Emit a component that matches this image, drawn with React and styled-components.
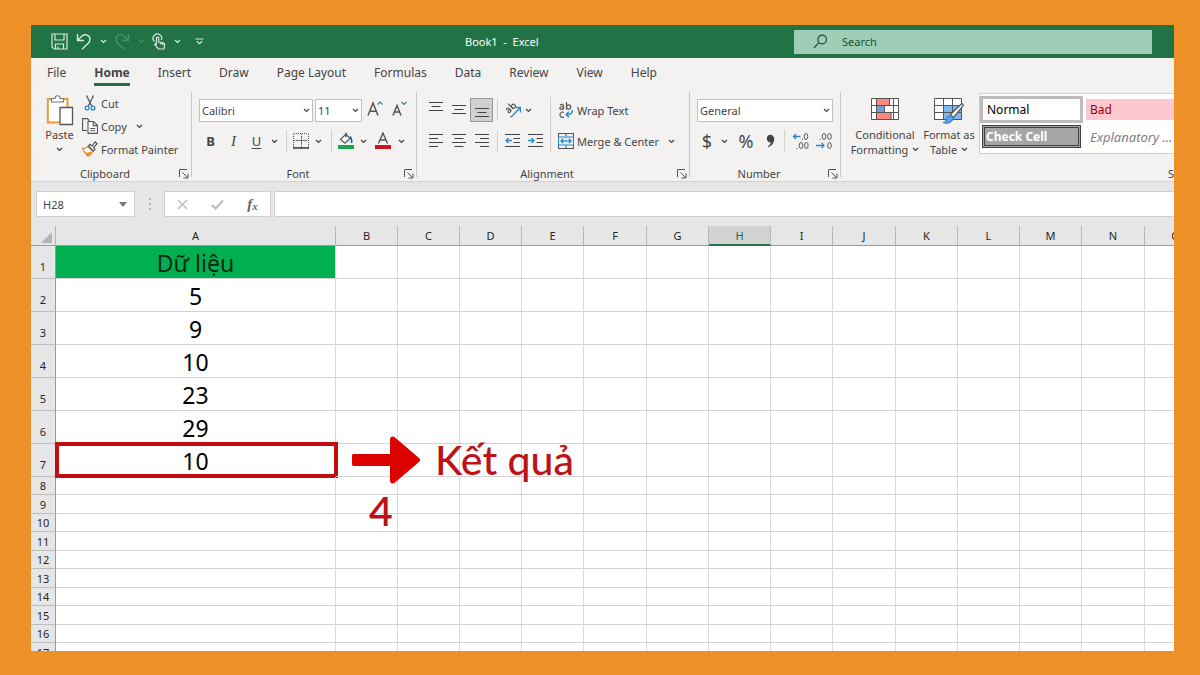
import React, { useState } from "react";
import styled, { createGlobalStyle, css } from "styled-components";

const GlobalStyle = createGlobalStyle`
  * {
    box-sizing: border-box;
  }

  body {
    margin: 0;
    background-color: #ed9028;
    font-family: "Noto Sans", "Open Sans", sans-serif;
    font-size: 12px;
    color: #444444;
  }

  button,
  input,
  select {
    font: inherit;
    color: inherit;
  }
`;

const Page = styled.div`
  height: 100vh;
  padding: 25px 26px 24px 31px;
  background-color: #ed9028;
`;

const Window = styled.main`
  display: flex;
  flex-direction: column;
  height: 100%;
  overflow: hidden;
  background-color: #ffffff;
`;

// Title bar
const TitleBar = styled.header`
  display: flex;
  flex: none;
  align-items: center;
  height: 33px;
  padding-right: 22px;
  background-color: #217346;
  color: #ffffff;
`;

const QuickTools = styled.div`
  display: flex;
  align-items: center;
  flex: 0 0 434px;
  padding-left: 16px;
`;

const Title = styled.h1`
  margin: 0;
  font-size: 11px;
  font-weight: 400;
  white-space: pre;
`;

const SearchBox = styled.label`
  display: flex;
  align-items: center;
  gap: 14px;
  width: 358px;
  height: 24px;
  margin-left: auto;
  padding-left: 19px;
  background-color: #9fcdb5;
  color: #185234;
`;

const SearchInput = styled.input`
  flex: 1;
  min-width: 0;
  padding: 0;
  border: none;
  outline: none;
  background: none;
  font-size: 11px;

  &::placeholder {
    color: #185234;
    opacity: 1;
  }
`;

// Tabs
const Tabs = styled.nav`
  display: flex;
  flex: none;
  gap: 28px;
  height: 30px;
  padding-left: 16px;
  background-color: #f3f2f1;
`;

const Tab = styled.button`
  height: 28px;
  padding: 5px 0 0;
  border: none;
  border-bottom: 3px solid ${(p) => (p.$active ? "#217346" : "transparent")};
  background: none;
  font-weight: ${(p) => (p.$active ? 700 : 400)};
  line-height: 20px;
  white-space: nowrap;
  cursor: pointer;
`;

// Ribbon
const Ribbon = styled.section`
  display: flex;
  flex: none;
  height: 94px;
  padding: 4px 0;
  overflow: hidden;
  border-bottom: 1px solid #d2d2d2;
  background-color: #f3f2f1;
`;

const Group = styled.div`
  display: flex;
  flex-direction: column;
  flex: 0 0 ${(p) => p.$w}px;
  border-right: 1px solid #c8c6c4;
`;

const GroupBody = styled.div`
  display: flex;
  flex: none;
  height: 76px;
  padding-left: ${(p) => p.$pad || 7}px;
`;

const GroupFooter = styled.div`
  display: flex;
  flex: none;
  align-items: center;
  height: 12px;
  padding-right: 2px;
  line-height: 12px;
  font-size: 11px;
`;

const GroupLabel = styled.span`
  flex: 1;
  text-align: center;
`;

const Launcher = styled.button`
  display: flex;
  padding: 0;
  border: none;
  background: none;
`;

const Rows = styled.div`
  display: flex;
  flex-direction: column;
  gap: 5px;
  padding-top: 5px;
`;

const Row = styled.div`
  display: flex;
  align-items: center;
  gap: ${(p) => p.$gap || 0}px;
  height: 26px;
`;

const Tool = styled.button`
  display: flex;
  flex: none;
  align-items: center;
  justify-content: center;
  width: ${(p) => p.$w || 23}px;
  height: 24px;
  padding: 0;
  border: none;
  background: none;
  cursor: pointer;

  svg {
    flex: none;
  }

  ${(p) =>
    p.$pressed &&
    css`
      border: 1px solid #979593;
      background-color: #d2d0ce;
    `}
`;

const BoldMark = styled.b`
  font-size: 13px;
`;

const ItalicMark = styled.i`
  font-family: "Liberation Serif", serif;
  font-size: 15px;
`;

const UnderlineMark = styled.u`
  font-size: 13px;
  text-underline-offset: 2px;
`;

const Symbol = styled.span`
  font-size: 18px;
  line-height: 20px;
`;

const Divider = styled.span`
  display: flex;
  justify-content: center;
  width: ${(p) => p.$w}px;

  &::before {
    content: "";
    width: 1px;
    height: 22px;
    background-color: #d2d0ce;
  }
`;

const LongDivider = styled.span`
  width: 1px;
  height: 56px;
  margin: 5px 7px 0 3px;
  background-color: #d2d0ce;
`;

const TextTool = styled.button`
  display: flex;
  align-items: center;
  gap: 3px;
  height: ${(p) => p.$h || 26}px;
  padding: 0;
  border: none;
  background: none;
  font-size: 11px;
  white-space: nowrap;
  cursor: pointer;
`;

const ChevronSlot = styled.span`
  display: flex;
  padding-left: 6px;
`;

const BigTool = styled.button`
  display: flex;
  flex-direction: column;
  align-items: center;
  width: ${(p) => p.$w}px;
  padding: 3px 0 0;
  border: none;
  background: none;
  font-size: 11px;
  line-height: 16px;
  white-space: nowrap;
  cursor: pointer;
`;

const BigIcon = styled.span`
  display: flex;
  height: 32px;
`;

const BigLine = styled.span`
  display: flex;
  align-items: center;
  gap: 4px;
  height: 15px;
`;

const ClipboardList = styled.div`
  padding-left: 8px;
`;

const SelectBox = styled.label`
  display: block;
  position: relative;
  width: ${(p) => p.$w}px;
  height: 23px;
`;

const Select = styled.select`
  width: 100%;
  height: 100%;
  padding: 0 0 0 2px;
  border: 1px solid #c3c1bf;
  border-radius: 0;
  appearance: none;
  background-color: #ffffff;
  font-size: 11px;
`;

const SelectArrow = styled.span`
  position: absolute;
  top: 9px;
  right: 3px;
  display: flex;
  pointer-events: none;
`;

const Gallery = styled.div`
  display: grid;
  grid-template-columns: 103px 103px 103px;
  grid-template-rows: 27px 23px;
  gap: 2px 3px;
  height: 61px;
  margin-top: 1px;
  margin-left: 3px;
  padding: 2px 0;
  border: 1px solid #d2d0ce;
  background-color: #ffffff;
`;

const StyleCell = styled.button`
  padding: 0 0 0 4px;
  border: none;
  background-color: #ffffff;
  color: #000000;
  font-size: 12px;
  line-height: 16px;
  text-align: left;
  white-space: nowrap;

  ${(p) =>
    p.$kind === "normal" &&
    css`
      border: 3px solid #bebcba;
    `}
  ${(p) =>
    p.$kind === "bad" &&
    css`
      margin: 3px 0;
      background-color: #ffc7ce;
      color: #9c0006;
    `}
  ${(p) =>
    p.$kind === "check" &&
    css`
      margin: 0 2px;
      padding-left: 1px;
      border: 3px double #3f3f3f;
      background-color: #a5a5a5;
      color: #ffffff;
      font-weight: 700;
    `}
  ${(p) =>
    p.$kind === "note" &&
    css`
      color: #7f7f7f;
      font-size: 13px;
      font-style: italic;
    `}
`;

// Formula bar
const FormulaBar = styled.section`
  display: flex;
  flex: none;
  align-items: center;
  height: 44px;
  padding-left: 5px;
  background-color: #e6e6e6;
`;

const NameBox = styled.label`
  display: flex;
  align-items: center;
  width: 99px;
  height: 26px;
  padding-right: 7px;
  border: 1px solid #cfcfcf;
  background-color: #ffffff;
`;

const NameInput = styled.input`
  flex: 1;
  min-width: 0;
  padding: 0 0 0 6px;
  border: none;
  outline: none;
  background: none;
  font-size: 11px;
`;

const Grip = styled.span`
  display: flex;
  justify-content: center;
  width: 29px;
`;

const FormulaTools = styled.div`
  display: flex;
  width: 107px;
  height: 26px;
  border: 1px solid #cfcfcf;
  background-color: #ffffff;
`;

const FormulaButton = styled.button`
  display: flex;
  flex: 1;
  align-items: center;
  justify-content: center;
  padding: 0;
  border: none;
  background: none;
  color: #666666;
  font-family: "Liberation Serif", serif;
  font-size: 15px;
  font-style: italic;
  font-weight: 700;
`;

const SmallX = styled.span`
  padding-top: 3px;
  font-size: 11px;
`;

const FormulaInput = styled.input`
  flex: 1;
  min-width: 0;
  height: 26px;
  margin-left: 3px;
  border: 1px solid #cfcfcf;
  border-right: none;
  border-radius: 0;
  background-color: #ffffff;
`;

// Sheet
const Sheet = styled.section`
  flex: 1;
  position: relative;
  min-height: 0;
  overflow: hidden;
`;

const Grid = styled.table`
  width: 100%;
  table-layout: fixed;
  border-spacing: 0;
`;

const Col = styled.col`
  width: ${(p) => p.$w}px;
`;

const Corner = styled.td`
  height: 20px;
  padding: 0 3px 2px 0;
  border-right: 1px solid #b5b5b5;
  border-bottom: 1px solid #9b9b9b;
  background-color: #e6e6e6;
  vertical-align: bottom;
`;

const CornerIcon = styled.svg`
  display: block;
  margin-left: auto;
`;

const ColHead = styled.th`
  height: 20px;
  padding: 0;
  border-right: 1px solid #b9b9b9;
  border-bottom: 1px solid #9b9b9b;
  background-color: #e6e6e6;
  color: #262626;
  font-size: 11px;
  font-weight: 400;
  line-height: 16px;

  ${(p) =>
    p.$selected &&
    css`
      padding-top: 1px;
      border-bottom: 2px solid #217346;
      background-color: #d2d2d2;
      color: #217346;
    `}
`;

const RowHead = styled.th`
  height: ${(p) => p.$h}px;
  padding: 0 0 ${(p) => (p.$h > 20 ? 3 : 0)}px;
  border-right: 1px solid #9b9b9b;
  border-bottom: 1px solid #bdbdbd;
  background-color: #e6e6e6;
  color: #262626;
  font-size: 11px;
  font-weight: 400;
  line-height: 17px;
  vertical-align: bottom;
`;

const Cell = styled.td`
  position: relative;
  padding: 2px 0 0;
  border-right: 1px solid #d9d9d9;
  border-bottom: 1px solid #d4d4d4;
  color: #000000;
  font-size: 23px;
  line-height: 30px;
  text-align: center;

  ${(p) =>
    p.$title &&
    css`
      background-color: #00b050;
      color: #06290f;
    `}
`;

const ResultFrame = styled.span`
  position: absolute;
  inset: -2px -3px -2px -1px;
  border: 4px solid #c00d12;
`;

const Result = styled.div`
  position: absolute;
  top: 206px;
  left: 320px;
  display: flex;
  align-items: center;
  gap: 14px;
  color: #bd1218;
  font-family: Lato, "Open Sans", sans-serif;
  font-size: 41px;
  font-weight: 500;
  line-height: 56px;
  white-space: nowrap;
`;

const StepNumber = styled.div`
  position: absolute;
  top: 257px;
  left: 338px;
  color: #bd1218;
  font-family: Lato, "Open Sans", sans-serif;
  font-size: 41px;
  font-weight: 600;
  line-height: 56px;
`;

const Chevron = ({ color = "#444444" }) => (
  <svg width="7" height="5" viewBox="0 0 7 5" fill="none" stroke={color} strokeWidth="1.2">
    <path d="M1 1l2.5 2.5L6 1" />
  </svg>
);

const LauncherIcon = () => (
  <svg width="10" height="10" viewBox="0 0 10 10" fill="none" stroke="#555">
    <path d="M.5 8V.5H8M3.500 3.500l5 5M9 4.500v4.500H4.500" />
  </svg>
);

const SaveIcon = () => (
  <svg width="17" height="17" viewBox="0 0 17 17" fill="none" stroke="#d6eadf" strokeWidth="1.200">
    <path d="M1 1h15v15H3l-2-2zM4 1v6h9V1M4.500 16v-5h8v5M7 16v-2.500" />
  </svg>
);

const UndoIcon = ({ color = "#d6eadf", flip }) => (
  <svg width="16" height="17" viewBox="0 0 16 17" fill="none" stroke={color} strokeWidth="1.400">
    <path
      transform={flip ? "translate(16 0) scale(-1 1)" : undefined}
      d="M1.500 1v6.500H8M1.500 7.500L6 3c3-2.600 8-.8 8 3.200 0 2-.8 3-2 4.200L6 16.300"
    />
  </svg>
);

const TouchIcon = () => (
  <svg width="14" height="17" viewBox="0 0 14 17" fill="none" stroke="#d6eadf" strokeWidth="1.200">
    <path d="M2.500 8.500A4.300 4.300 0 1 1 9.300 7" />
    <path d="M4.500 12V5.200c0-1.600 2.200-1.600 2.200 0V9l4.300.8c1 .2 1.700.8 1.600 1.700L12 16H6.500L3 12.200c-.8-.9.3-1.800 1.500-1M8.800 9.500v2M10.700 10v2" />
  </svg>
);

const CustomizeIcon = () => (
  <svg width="9" height="7" viewBox="0 0 9 7" fill="none" stroke="#d6eadf" strokeWidth="1.200">
    <path d="M.5 1h8M1.800 3.200l2.700 2.500 2.700-2.500" />
  </svg>
);

const SearchIcon = () => (
  <svg width="15" height="15" viewBox="0 0 15 15" fill="none" stroke="#185234" strokeWidth="1.200">
    <circle cx="9.200" cy="5.500" r="4.300" />
    <path d="M6 8.700L.8 14" />
  </svg>
);

const PasteIcon = () => (
  <svg width="28" height="31" viewBox="0 0 28 31" fill="none">
    <path d="M8 4H1.800v23.500H13M15 4h6.500v8" stroke="#eb9b3b" strokeWidth="2" />
    <path d="M3 5.500h17V12h-7v14H3z" fill="#fff" />
    <path d="M5.500 7V3.500H9C9.200-.2 14-.2 14.200 3.500h3.300V7z" fill="#fff" stroke="#777" strokeWidth="1.200" />
    <path d="M14 12.500h12.500v17H14z" fill="#fff" stroke="#555" strokeWidth="1.300" />
  </svg>
);

const CutIcon = () => (
  <svg width="16" height="16" viewBox="0 0 16 16" fill="none">
    <path d="M4.500.5l5.300 10.700M11.500.5L6.200 11.200" stroke="#555" strokeWidth="1.300" />
    <circle cx="5" cy="13" r="1.900" stroke="#2b88c8" strokeWidth="1.300" />
    <circle cx="11" cy="13" r="1.900" stroke="#2b88c8" strokeWidth="1.300" />
  </svg>
);

const CopyIcon = () => (
  <svg width="16" height="16" viewBox="0 0 16 16" fill="none" stroke="#555" strokeWidth="1.100">
    <path d="M5 12.500H.6V.6h4.900l2 2.200" />
    <path d="M6 3.500h5.500l3.900 3.800v8.100H6z" fill="#fff" />
    <path d="M11.200 3.700v3.900h4M8.200 10.500h5M8.200 12.700h5" />
  </svg>
);

const PainterIcon = () => (
  <svg width="16" height="16" viewBox="0 0 16 16" fill="none">
    <path d="M.8 7.500C3 8 4.500 6.800 6 5.600l4.800 4.900c-.9 2-2.400 3.800-4.800 4.700C4 13.500 2 11 .8 7.500z" fill="#fff" stroke="#e2892b" strokeWidth="1.300" />
    <path d="M3 11.500c2.500.5 4.200-.2 6.500-1.300L8.500 13 6 15.200z" fill="#eb8d26" />
    <path d="M6.300 5L8 3.300l2 1.800L13.200 1l2 1.800-3.700 3.600 1.500 1.800-1.600 1.800z" fill="#fff" stroke="#555" strokeWidth="1.200" />
  </svg>
);

const FontSizeIcon = ({ grow }) => (
  <svg width="17" height="20" viewBox="0 0 17 20" fill="none">
    <path
      d={grow ? "M1 15.500L6 3l5 12.500M2.700 11.300h6.600" : "M2 15.500L6 5.500l4 10M3.400 12h5.200"}
      stroke="#555"
      strokeWidth="1.500"
    />
    <path d={grow ? "M10.500 4.500L13 2l2.500 2.500" : "M10.500 2L13 4.500 15.500 2"} stroke="#2b7bb0" strokeWidth="1.200" />
  </svg>
);

const BorderIcon = () => (
  <svg width="16" height="16" viewBox="0 0 16 16" fill="none" stroke="#555">
    <path d="M1 .5h14M1 7.500h14M.5 1v13M8.500 1v13M15.500 1v13" strokeDasharray="1 1" />
    <path d="M4 7.500h9M8.500 4v8" stroke="#777" />
    <path d="M0 15h16" stroke="#333" strokeWidth="1.500" />
  </svg>
);

const FillIcon = () => (
  <svg width="16" height="18" viewBox="0 0 16 18" fill="none">
    <path d="M2.500 7.500L8 2l4 4.500-5 4.800z" fill="#fff" stroke="#555" strokeWidth="1.200" />
    <path d="M8 5V.8M12 4.500c1.600 1.500 2 3.200 1.700 6.500" stroke="#1f5f8f" strokeWidth="1.500" />
    <path d="M0 13h16v4H0z" fill="#18a650" />
  </svg>
);

const FontColorIcon = () => (
  <svg width="16" height="18" viewBox="0 0 16 18" fill="none">
    <path d="M3.500 11.500L8 1l4.500 10.500M5 8h6" stroke="#555" strokeWidth="1.400" />
    <path d="M0 13h16v4H0z" fill="#cf1420" />
  </svg>
);

// horizontal strokes of each alignment glyph
const lines = {
  top: "M0 1.500h14M2.500 5.500h9M0 9.500h14",
  middle: "M0 4.500h14M2.500 8.500h9M0 12.500h14",
  bottom: "M0 7.500h14M2.500 11.500h9M0 15.500h14",
  left: "M0 2.500h14M0 6.500h9M0 10.500h14M0 14.500h9",
  center: "M0 2.500h14M2.500 6.500h9M0 10.500h14M2.500 14.500h9",
  right: "M0 2.500h14M5 6.500h9M0 10.500h14M5 14.500h9",
};

const LinesIcon = ({ kind }) => (
  <svg width="14" height="18" viewBox="0 0 14 18" stroke="#444" strokeWidth="1.100">
    <path d={lines[kind]} />
  </svg>
);

const OrientationIcon = () => (
  <svg width="16" height="16" viewBox="0 0 16 16" fill="none">
    <g stroke="#555" strokeWidth="1.200" transform="rotate(-45 6 6)">
      <path d="M1.200 4.200c1-1 3-.8 3 .8v3.500M4.200 6C2 5.800 1 6.300 1 7.200c0 1.500 2.600 1.300 3.200 0M7 .8v7.700" />
      <circle cx="9" cy="6.500" r="2" />
    </g>
    <path d="M5.500 15.500L15 6M10.500 5.500h5v5" stroke="#2b88c8" strokeWidth="1.400" />
  </svg>
);

const IndentIcon = ({ out }) => (
  <svg width="15" height="18" viewBox="0 0 15 18" fill="none" strokeWidth="1.100">
    <path d="M0 2.500h15M8.500 6.500H15M8.500 10.500H15M0 14.500h15" stroke="#444" />
    <path d={out ? "M7 8.500H1M3.500 6L1 8.500 3.500 11" : "M0 8.500h6M3.500 6L6 8.500 3.500 11"} stroke="#2b88c8" strokeWidth="1.300" />
  </svg>
);

const WrapIcon = () => (
  <svg width="16" height="18" viewBox="0 0 16 18" fill="none">
    <g stroke="#555" strokeWidth="1.200">
      <path d="M2 4c1-1 3.500-1 3.500 1v3.500M5.500 5.800C3 5.600 1.800 6.200 1.800 7.200c0 1.600 3 1.600 3.700-.2M8.500 1v7.500" />
      <circle cx="10.600" cy="6" r="2.100" />
      <path d="M6 11.500c-1.500-1-4-.4-4 2.200s2.500 3.200 4 2.200" />
    </g>
    <path d="M14 9c1 3-1 4.800-5.500 4.500M11 10.800l-2.800 2.700L11 16.300" stroke="#2b88c8" strokeWidth="1.500" />
  </svg>
);

const MergeIcon = () => (
  <svg width="16" height="16" viewBox="0 0 16 16" fill="none">
    <path d="M.5.5h15v15H.5zM8 .5v3M8 12.500v3" stroke="#555" strokeWidth="1.100" />
    <path d="M.5 4h15v8H.5z" fill="#d9edf9" stroke="#2b88c8" />
    <path d="M3 8h10M5.200 5.800L3 8l2.200 2.200M10.800 5.800L13 8l-2.200 2.200" stroke="#1f7ab8" strokeWidth="1.200" />
  </svg>
);

const CommaIcon = () => (
  <svg width="9" height="14" viewBox="0 0 9 14">
    <path d="M4.200.8c2.400 0 4 1.700 4 4.200 0 3.500-2.200 6.800-5.700 8.200l-.6-1c1.800-1 2.800-2.200 2.900-3.800C2.500 8.500.8 7 .8 4.500.8 2.300 2.300.8 4.200.8z" fill="#444" />
  </svg>
);

const DecimalIcon = ({ more }) => (
  <svg width="18" height="18" viewBox="0 0 18 18" fill="none" stroke="#555">
    {more ? (
      <>
        <path d="M8.500 4.500H1.500M4 2L1.500 4.500 4 7" stroke="#2b88c8" strokeWidth="1.300" />
        <ellipse cx="14" cy="4.500" rx="1.800" ry="3" />
        <ellipse cx="9" cy="13.500" rx="1.800" ry="3" />
        <ellipse cx="14.300" cy="13.500" rx="1.800" ry="3" />
        <path d="M10 7.500h1M4.500 16.500h1" />
      </>
    ) : (
      <>
        <ellipse cx="9" cy="4.500" rx="1.800" ry="3" />
        <ellipse cx="14.500" cy="4.500" rx="1.800" ry="3" />
        <ellipse cx="14.500" cy="13.500" rx="1.800" ry="3" />
        <path d="M4.500 7.500h1" />
        <path d="M1 13.500h8M6.500 11L9 13.500 6.500 16" stroke="#2b88c8" strokeWidth="1.300" />
      </>
    )}
  </svg>
);

const ConditionalIcon = () => (
  <svg width="28" height="26" viewBox="0 0 28 26" fill="none">
    <path d="M.5 3.500h27v21H.5z" fill="#fff" />
    <path d="M5.500 3.500h13v7h-13zM5.500 17.500H20v7H5.500z" fill="#ff8585" />
    <path d="M5.500 10.500h8v7h-8z" fill="#6f9fd8" />
    <path d="M.5 3.500h27v21H.5zM.5 10.500h27M.5 17.500h27M5.500 3.500v21M22.500 3.500v21M18.500 3.500v7M13.500 10.500v7M20 17.500v7" stroke="#555" />
  </svg>
);

const FormatTableIcon = () => (
  <svg width="30" height="30" viewBox="0 0 30 30" fill="none">
    <path d="M.5 3.500h27v21H.5z" fill="#fff" />
    <path d="M9.500 10.500h18v14h-18z" fill="#7db8ee" />
    <path d="M.5 3.500h27v21H.5zM.5 10.500h27M.5 17.500h27M9.500 3.500v21M18.500 3.500v21" stroke="#555" />
    <path d="M16.500 19.500L27 9.300c1.500-1 2.700.2 1.900 1.700L19.500 22.500z" fill="#fff" stroke="#555" strokeWidth="1.200" />
    <path d="M9 27.500c3 0 2.500-2.500 3.700-5 1.300-2.500 5-2.500 6.300 0 .8 4-5 7.500-10 5z" fill="#5b9fe0" stroke="#3a7fc0" />
  </svg>
);

const ArrowIcon = () => (
  <svg width="70" height="50" viewBox="0 0 70 50">
    <path
      d="M3 19h36V4c0-2.500 3-3.500 5-1.500l24 20.500c1.500 1.300 1.500 2.700 0 4L44 47.500c-2 2-5 1-5-1.500V31H3c-1.500 0-2-.5-2-2v-8c0-1.500.5-2 2-2z"
      fill="#dd0202"
    />
  </svg>
);

const tabs = ["File", "Home", "Insert", "Draw", "Page Layout", "Formulas", "Data", "Review", "View", "Help"];

const columns = [
  { name: "A", w: 280 },
  { name: "B", w: 62 },
  { name: "C", w: 62 },
  { name: "D", w: 62 },
  { name: "E", w: 62 },
  { name: "F", w: 63 },
  { name: "G", w: 62 },
  { name: "H", w: 62 },
  { name: "I", w: 62 },
  { name: "J", w: 63 },
  { name: "K", w: 62 },
  { name: "L", w: 62 },
  { name: "M", w: 62 },
  { name: "N", w: 63 },
  { name: "O", w: 62 },
];

const values = ["Dữ liệu", "5", "9", "10", "23", "29", "10"];

const rows = Array.from({ length: 17 }, (_, i) => ({
  number: i + 1,
  value: values[i] || "",
  h: i < 7 ? 33 : i % 2 ? 18 : 19,
}));

const Footer = ({ label }) => (
  <GroupFooter>
    <GroupLabel>{label}</GroupLabel>
    <Launcher aria-label={`${label} settings`}>
      <LauncherIcon />
    </Launcher>
  </GroupFooter>
);

const DropDown = ({ label, value, w }) => (
  <SelectBox $w={w}>
    <Select aria-label={label} defaultValue={value}>
      <option>{value}</option>
    </Select>
    <SelectArrow>
      <Chevron />
    </SelectArrow>
  </SelectBox>
);

const ClipboardGroup = () => (
  <Group $w={161}>
    <GroupBody $pad={14}>
      <BigTool $w={29}>
        <BigIcon>
          <PasteIcon />
        </BigIcon>
        <BigLine>Paste</BigLine>
        <BigLine>
          <Chevron />
        </BigLine>
      </BigTool>
      <ClipboardList>
        <TextTool $h={22}>
          <CutIcon /> Cut
        </TextTool>
        <TextTool $h={24}>
          <CopyIcon /> Copy
          <ChevronSlot>
            <Chevron />
          </ChevronSlot>
        </TextTool>
        <TextTool $h={22}>
          <PainterIcon /> Format Painter
        </TextTool>
      </ClipboardList>
    </GroupBody>
    <Footer label="Clipboard" />
  </Group>
);

const FontGroup = () => (
  <Group $w={225}>
    <GroupBody>
      <Rows>
        <Row $gap={2}>
          <DropDown label="Font name" value="Calibri" w={114} />
          <DropDown label="Font size" value="11" w={47} />
          <Tool $w={22} aria-label="Increase font size">
            <FontSizeIcon grow />
          </Tool>
          <Tool $w={22} aria-label="Decrease font size">
            <FontSizeIcon />
          </Tool>
        </Row>
        <Row>
          <Tool>
            <BoldMark>B</BoldMark>
          </Tool>
          <Tool>
            <ItalicMark>I</ItalicMark>
          </Tool>
          <Tool>
            <UnderlineMark>U</UnderlineMark>
          </Tool>
          <Tool $w={12} aria-label="Underline styles">
            <Chevron />
          </Tool>
          <Divider $w={12} />
          <Tool $w={18} aria-label="Borders">
            <BorderIcon />
          </Tool>
          <Tool $w={16} aria-label="Border styles">
            <Chevron />
          </Tool>
          <Divider $w={10} />
          <Tool $w={20} aria-label="Fill color">
            <FillIcon />
          </Tool>
          <Tool $w={14} aria-label="Fill colors">
            <Chevron />
          </Tool>
          <Tool $w={26} aria-label="Font color">
            <FontColorIcon />
          </Tool>
          <Tool $w={10} aria-label="Font colors">
            <Chevron />
          </Tool>
        </Row>
      </Rows>
    </GroupBody>
    <Footer label="Font" />
  </Group>
);

const AlignmentGroup = () => (
  <Group $w={273}>
    <GroupBody>
      <Rows>
        <Row>
          <Tool aria-label="Top align">
            <LinesIcon kind="top" />
          </Tool>
          <Tool aria-label="Middle align">
            <LinesIcon kind="middle" />
          </Tool>
          <Tool $pressed aria-label="Bottom align">
            <LinesIcon kind="bottom" />
          </Tool>
          <Divider $w={8} />
          <Tool aria-label="Orientation">
            <OrientationIcon />
          </Tool>
          <Tool $w={8} aria-label="Orientation angles">
            <Chevron />
          </Tool>
        </Row>
        <Row>
          <Tool aria-label="Align left">
            <LinesIcon kind="left" />
          </Tool>
          <Tool aria-label="Center">
            <LinesIcon kind="center" />
          </Tool>
          <Tool aria-label="Align right">
            <LinesIcon kind="right" />
          </Tool>
          <Divider $w={8} />
          <Tool aria-label="Decrease indent">
            <IndentIcon out />
          </Tool>
          <Tool aria-label="Increase indent">
            <IndentIcon />
          </Tool>
        </Row>
      </Rows>
      <LongDivider />
      <Rows>
        <TextTool>
          <WrapIcon /> Wrap Text
        </TextTool>
        <TextTool>
          <MergeIcon /> Merge &amp; Center
          <ChevronSlot>
            <Chevron />
          </ChevronSlot>
        </TextTool>
      </Rows>
    </GroupBody>
    <Footer label="Alignment" />
  </Group>
);

const NumberGroup = () => (
  <Group $w={151}>
    <GroupBody>
      <Rows>
        <Row>
          <DropDown label="Number format" value="General" w={136} />
        </Row>
        <Row>
          <Tool $w={20}>
            <Symbol>$</Symbol>
          </Tool>
          <Tool $w={14} aria-label="Currencies">
            <Chevron />
          </Tool>
          <Tool $w={30}>
            <Symbol>%</Symbol>
          </Tool>
          <Tool $w={18} aria-label="Comma style">
            <CommaIcon />
          </Tool>
          <Divider $w={10} />
          <Tool aria-label="Increase decimal">
            <DecimalIcon more />
          </Tool>
          <Tool aria-label="Decrease decimal">
            <DecimalIcon />
          </Tool>
        </Row>
      </Rows>
    </GroupBody>
    <Footer label="Number" />
  </Group>
);

const StylesGroup = () => (
  <Group $w={697}>
    <GroupBody>
      <BigTool $w={74}>
        <BigIcon>
          <ConditionalIcon />
        </BigIcon>
        <BigLine>Conditional</BigLine>
        <BigLine>
          Formatting <Chevron />
        </BigLine>
      </BigTool>
      <BigTool $w={54}>
        <BigIcon>
          <FormatTableIcon />
        </BigIcon>
        <BigLine>Format as</BigLine>
        <BigLine>
          Table <Chevron />
        </BigLine>
      </BigTool>
      <Gallery>
        <StyleCell $kind="normal">Normal</StyleCell>
        <StyleCell $kind="bad">Bad</StyleCell>
        <span />
        <StyleCell $kind="check">Check Cell</StyleCell>
        <StyleCell $kind="note">Explanatory ...</StyleCell>
      </Gallery>
    </GroupBody>
    <Footer label="Styles" />
  </Group>
);

const App = () => {
  const [activeTab, setActiveTab] = useState("Home");
  const [search, setSearch] = useState("");
  const [formula, setFormula] = useState("");

  return (
    <Page>
      <GlobalStyle />
      <Window>
        <TitleBar>
          <QuickTools>
            <Tool $w={24} aria-label="Save">
              <SaveIcon />
            </Tool>
            <Tool $w={26} aria-label="Undo">
              <UndoIcon />
            </Tool>
            <Tool $w={12} aria-label="Undo list">
              <Chevron color="#d6eadf" />
            </Tool>
            <Tool $w={26} aria-label="Redo">
              <UndoIcon color="#46906a" flip />
            </Tool>
            <Tool $w={12} aria-label="Redo list">
              <Chevron color="#46906a" />
            </Tool>
            <Tool $w={24} aria-label="Touch mode">
              <TouchIcon />
            </Tool>
            <Tool $w={12} aria-label="Touch modes">
              <Chevron color="#d6eadf" />
            </Tool>
            <Tool $w={32} aria-label="Customize toolbar">
              <CustomizeIcon />
            </Tool>
          </QuickTools>
          <Title>{"Book1  -  Excel"}</Title>
          <SearchBox>
            <SearchIcon />
            <SearchInput
              aria-label="Search"
              placeholder="Search"
              value={search}
              onChange={(e) => setSearch(e.target.value)}
            />
          </SearchBox>
        </TitleBar>

        <Tabs>
          {tabs.map((tab) => (
            <Tab key={tab} $active={tab === activeTab} onClick={() => setActiveTab(tab)}>
              {tab}
            </Tab>
          ))}
        </Tabs>

        <Ribbon>
          <ClipboardGroup />
          <FontGroup />
          <AlignmentGroup />
          <NumberGroup />
          <StylesGroup />
        </Ribbon>

        <FormulaBar>
          <NameBox>
            <NameInput aria-label="Name box" defaultValue="H28" />
            <svg width="8" height="5" viewBox="0 0 8 5">
              <path d="M0 0h8L4 5z" fill="#777" />
            </svg>
          </NameBox>
          <Grip>
            <svg width="2" height="12" viewBox="0 0 2 12" fill="#b0b0b0">
              <path d="M0 0h2v2H0zM0 5h2v2H0zM0 10h2v2H0z" />
            </svg>
          </Grip>
          <FormulaTools>
            <FormulaButton aria-label="Cancel">
              <svg width="11" height="11" viewBox="0 0 11 11" stroke="#bdbdbd" strokeWidth="1.600">
                <path d="M1 1l9 9M10 1l-9 9" />
              </svg>
            </FormulaButton>
            <FormulaButton aria-label="Enter">
              <svg width="13" height="11" viewBox="0 0 13 11" fill="none" stroke="#bdbdbd" strokeWidth="2.200">
                <path d="M1 6l3.500 3.500L12 1.500" />
              </svg>
            </FormulaButton>
            <FormulaButton>
              f<SmallX>x</SmallX>
            </FormulaButton>
          </FormulaTools>
          <FormulaInput aria-label="Formula bar" value={formula} onChange={(e) => setFormula(e.target.value)} />
        </FormulaBar>

        <Sheet>
          <Grid>
            <colgroup>
              <Col $w={25} />
              {columns.map((c) => (
                <Col key={c.name} $w={c.w} />
              ))}
            </colgroup>
            <thead>
              <tr>
                <Corner>
                  <CornerIcon width="11" height="11" viewBox="0 0 11 11">
                    <path d="M11 0v11H0z" fill="#b4b4b4" />
                  </CornerIcon>
                </Corner>
                {columns.map((c) => (
                  <ColHead key={c.name} $selected={c.name === "H"}>
                    {c.name}
                  </ColHead>
                ))}
              </tr>
            </thead>
            <tbody>
              {rows.map((row) => (
                <tr key={row.number}>
                  <RowHead $h={row.h}>{row.number}</RowHead>
                  {columns.map((c) => (
                    <Cell key={c.name} $title={c.name === "A" && row.number === 1}>
                      {c.name === "A" && row.value}
                      {c.name === "A" && row.number === 7 && <ResultFrame />}
                    </Cell>
                  ))}
                </tr>
              ))}
            </tbody>
          </Grid>
          <Result>
            <ArrowIcon />
            Kết quả
          </Result>
          <StepNumber>4</StepNumber>
        </Sheet>
      </Window>
    </Page>
  );
};

export default App;
